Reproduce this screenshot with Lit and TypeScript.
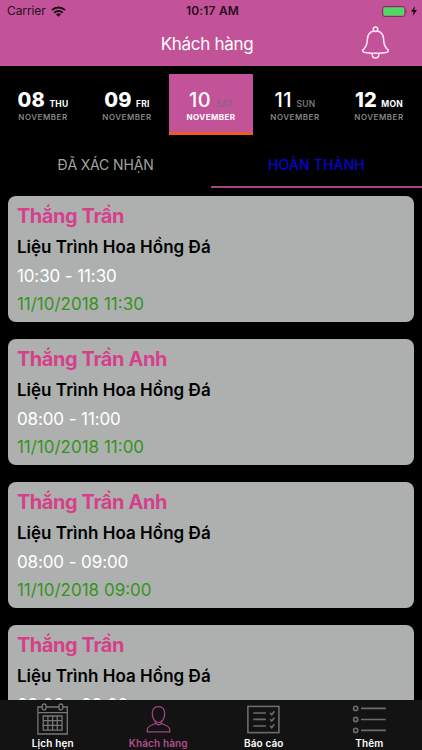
import { LitElement, html, css, svg, nothing } from "lit";
import { customElement, property } from "lit/decorators.js";
import { classMap } from "lit/directives/class-map.js";

interface Day { num: string; name: string; light?: boolean; selected?: boolean; }
interface Visit { customer: string; service: string; time: string; date?: string; }

const DAYS: Day[] = [
  { num: "08", name: "THU" },
  { num: "09", name: "FRI" },
  { num: "10", name: "SAT", light: true, selected: true },
  { num: "11", name: "SUN", light: true },
  { num: "12", name: "MON" },
];

const SERVICE = "Liệu Trình Hoa Hồng Đá";
const VISITS: Visit[] = [
  { customer: "Thắng Trần", service: SERVICE, time: "10:30 - 11:30", date: "11/10/2018 11:30" },
  { customer: "Thắng Trần Anh", service: SERVICE, time: "08:00 - 11:00", date: "11/10/2018 11:00" },
  { customer: "Thắng Trần Anh", service: SERVICE, time: "08:00 - 09:00", date: "11/10/2018 09:00" },
  { customer: "Thắng Trần", service: SERVICE, time: "08:00 - 09:00" },
];

@customElement("status-bar")
class StatusBar extends LitElement {
  static styles = css`
    :host { display: grid; grid-template-columns: 1fr auto 1fr; align-items: center; height: 22px; padding: 0 5px 0 7px; color: #2b0b20; font-size: 12px; line-height: 22px; }
    .left { display: flex; align-items: center; gap: 5px; letter-spacing: -0.1px; }
    .time { font-weight: 600; letter-spacing: 0.2px; padding-left: 1px; }
    .right { display: flex; align-items: center; justify-content: flex-end; gap: 3.5px; }
    svg { display: block; }
  `;
  render() {
    return html`
      <div class="left"><span>Carrier</span>
        <svg width="15" height="11" viewBox="0 0 15 11" fill="none" stroke="#1c0814" stroke-width="2">
          <path d="M1 4.1 A9.4 9.4 0 0 1 14 4.1" /><path d="M3.3 6.7 A6 6 0 0 1 11.7 6.7" />
          <path d="M7.5 10.8 L5 8.4 A3.6 3.6 0 0 1 10 8.4 Z" fill="#1c0814" stroke="none" />
        </svg>
      </div>
      <div class="time">10:17 AM</div>
      <div class="right">
        <svg width="26" height="11" viewBox="0 0 26 11">
          <rect x=".5" y=".5" width="22.6" height="10" rx="2.4" fill="none" stroke="#7b2f5f" />
          <rect x="1.5" y="1.5" width="20.6" height="8" rx="1" fill="#4cd964" />
          <path d="M24.3 3.7 Q25.8 5.5 24.3 7.3Z" fill="#7b2f5f" />
        </svg>
        <svg width="6" height="10" viewBox="0 0 6 10"><path d="M4 0 L0 5.7 H2.6 L1.8 10 L6 4.1 H3.3Z" fill="#1c0814" /></svg>
      </div>`;
  }
}

@customElement("day-cell")
class DayCell extends LitElement {
  @property({ attribute: false }) day!: Day;
  static styles = css`
    :host { display: block; width: 84px; }
    .cell { height: 60.5px; box-sizing: border-box; padding-top: 14.5px; border-bottom: 3px solid transparent; text-align: center; }
    .top { display: flex; justify-content: center; align-items: baseline; gap: 4.5px; height: 22px; line-height: 22px; }
    .num { font-size: 20px; font-weight: 800; color: #fff; letter-spacing: 0.1px; }
    .name { font-size: 8.5px; font-weight: 700; color: #fff; letter-spacing: 0.25px; }
    .month { font-size: 8px; line-height: 12px; font-weight: 600; color: #838383; letter-spacing: 0.5px; }
    .light .num { font-weight: 500; letter-spacing: 0.5px; }
    .light .name { color: #777; font-weight: 600; }
    .selected { background: #c35398; border-bottom-color: #ef5a24; }
    .selected .name { color: #8e6181; }
    .selected .month { color: #fff; font-weight: 700; letter-spacing: 0.4px; }
  `;
  render() {
    const d = this.day;
    return html`<div class=${classMap({ cell: true, light: !!d.light, selected: !!d.selected })}>
      <div class="top"><span class="num">${d.num}</span><span class="name">${d.name}</span></div>
      <div class="month">NOVEMBER</div>
    </div>`;
  }
}

@customElement("visit-card")
class VisitCard extends LitElement {
  @property({ attribute: false }) visit!: Visit;
  static styles = css`
    :host { display: block; flex: none; height: 126.8px; box-sizing: border-box; padding: 6px 8.5px; border-radius: 8px; background: #aeb0af; white-space: nowrap; }
    .name { height: 30px; line-height: 29px; font-size: 20px; font-weight: 700; color: #d6408b; letter-spacing: -0.42px; }
    .service { height: 29px; line-height: 31px; font-size: 17px; font-weight: 600; color: #000; letter-spacing: 0.03px; }
    .time { height: 28px; line-height: 30px; font-size: 17px; color: #fff; letter-spacing: -0.1px; }
    .date { height: 29px; line-height: 31px; font-size: 17px; color: #35941b; letter-spacing: 0; }
  `;
  render() {
    const v = this.visit;
    return html`<div class="name">${v.customer}</div><div class="service">${v.service}</div>
      <div class="time">${v.time}</div>${v.date ? html`<div class="date">${v.date}</div>` : nothing}`;
  }
}

const calendarIcon = svg`
  <path d="M6 4 H1.9 V31 H31.3 V4 H27 M10 4 H23 M1.9 9.6 H31.3" />
  <rect x="6.2" y="1" width="3.8" height="5.8" rx="1.9" /><rect x="23" y="1" width="3.8" height="5.8" rx="1.9" />
  <path d="M7.2 13 H26 V27.2 H7.2Z M11.9 13 V27.2 M16.6 13 V27.2 M21.3 13 V27.2 M7.2 17.7 H26 M7.2 22.4 H26" />`;
const personIcon = svg`
  <path d="M16.5 3.6 C12.3 3.6 10.3 6.6 10.3 10.6 C10.3 15.4 12.8 19.6 16.5 19.6 C20.2 19.6 22.7 15.4 22.7 10.6 C22.7 6.6 20.7 3.6 16.5 3.6Z" />
  <path d="M13.4 18.5 V20.2 C13.4 21.5 5.7 22 5.3 26.2 V28.8 H27.7 V26.2 C27.3 22 19.6 21.5 19.6 20.2 V18.5 M13.4 20.2 Q16.5 23.4 19.6 20.2" />`;
const reportIcon = svg`
  <rect x="0.9" y="3.4" width="31" height="26.2" />
  <path d="M6.3 10 H18.9 M6.3 16.4 H18.9 M6.3 23 H18.9 M23 9.8 L24.7 11.7 L27.3 8.3 M23 16.2 L24.7 18.1 L27.3 14.7 M23 22.8 L24.7 24.7 L27.3 21.3" />`;
const moreIcon = svg`
  <circle cx="2.7" cy="5.4" r="2.1" /><circle cx="2.7" cy="16.5" r="2.1" /><circle cx="2.7" cy="27.4" r="2.1" />
  <path d="M8 5.4 H32.8 M8 16.5 H32.8 M8 27.4 H32.8" />`;

@customElement("tab-bar")
class TabBar extends LitElement {
  static styles = css`
    :host { display: grid; grid-template-columns: repeat(4, 1fr); flex: none; height: 50px; background: #131313; }
    .item { display: flex; flex-direction: column; align-items: center; padding-top: 2.5px; color: #fff; }
    svg { display: block; width: 33px; height: 33px; fill: none; stroke: #777; stroke-width: 1.3; overflow: visible; }
    .label { font-size: 10px; font-weight: 600; line-height: 14px; letter-spacing: 0.14px; }
    .active { color: #b44d8e; }
    .active svg { stroke: #a4437f; }
    .bold svg { stroke-width: 1.6; stroke: #6c6c6c; }
  `;
  render() {
    const items = [
      { label: "Lịch hẹn", icon: calendarIcon },
      { label: "Khách hàng", icon: personIcon, active: true },
      { label: "Báo cáo", icon: reportIcon, bold: true },
      { label: "Thêm", icon: moreIcon, bold: true },
    ];
    return items.map((i) => html`<div class=${classMap({ item: true, active: !!i.active, bold: !!i.bold })}>
      <svg viewBox="0 0 33 33">${i.icon}</svg><span class="label">${i.label}</span></div>`);
  }
}

@customElement("app-root")
class AppRoot extends LitElement {
  static styles = css`
    :host { display: flex; flex-direction: column; width: 422px; height: 750px; overflow: hidden; background: #000; font-family: Inter, "Noto Sans", sans-serif; }
    header { flex: none; height: 65.5px; background: #c35398; }
    .title { display: grid; grid-template-columns: 1fr auto 1fr; align-items: center; height: 43px; padding-right: 8px; color: #fff; font-size: 17px; letter-spacing: -0.3px; }
    .title svg { justify-self: end; margin: 0 24px 2px 0; display: block; }
    .days { display: flex; justify-content: center; flex: none; height: 60px; padding-top: 8.5px; }
    .tabs { display: grid; grid-template-columns: 1fr 1fr; flex: none; height: 54px; }
    .tab { height: 53.5px; box-sizing: border-box; padding-top: 10px; text-align: center; font-size: 14px; line-height: 42px; color: #a3a3a3; border-bottom: 2px solid transparent; letter-spacing: -0.15px; }
    .on { color: #0505cc; font-weight: 500; border-color: #a4477f; letter-spacing: 0.15px; }
    .list { flex: 1; min-height: 0; overflow: hidden; display: flex; flex-direction: column; gap: 16.2px; padding: 7.6px 8.4px 0; }
  `;
  render() {
    return html`
      <header>
        <status-bar></status-bar>
        <div class="title"><span></span><span>Khách hàng</span>
          <svg width="29" height="33" viewBox="0 0 29 34" fill="none" stroke="#ffe3f5" stroke-width="1.6">
            <circle cx="14.5" cy="3.4" r="2.3" />
            <path d="M12.7 5.1 C8.4 6 6.3 9 6.2 13.5 C6 20 4.8 22.4 1.4 24.6 C0.5 27.2 3.8 28 14.5 28 C25.2 28 28.5 27.2 27.6 24.6 C24.2 22.4 23 20 22.8 13.5 C22.7 9 20.6 6 16.3 5.1" />
            <path d="M11.1 28 V29.4 C11.1 34.2 17.9 34.2 17.9 29.4 V28" />
          </svg>
        </div>
      </header>
      <div class="days">${DAYS.map((d) => html`<day-cell .day=${d}></day-cell>`)}</div>
      <div class="tabs"><div class="tab">ĐÃ XÁC NHẬN</div><div class="tab on">HOÀN THÀNH</div></div>
      <div class="list">${VISITS.map((v) => html`<visit-card .visit=${v}></visit-card>`)}</div>
      <tab-bar></tab-bar>`;
  }
}
